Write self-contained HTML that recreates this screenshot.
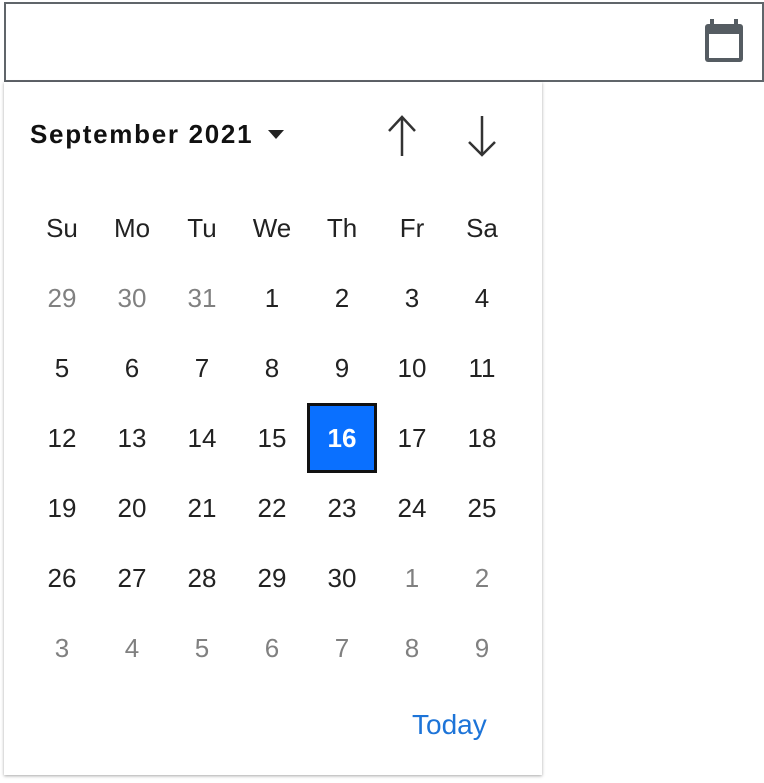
<!DOCTYPE html>
<html><head><style>
body{margin:0;background:#fff;font-family:"Liberation Sans",Arial,sans-serif;width:764px;height:783px;position:relative;overflow:hidden}
.inp{position:absolute;left:4px;top:2px;width:756px;height:76px;border:2px solid #60656a}
.pop{position:absolute;left:4px;top:82px;width:538px;height:693px;background:#fff;box-shadow:0 1px 3px rgba(0,0,0,.35)}
.c{position:absolute;width:70px;height:70px;line-height:70px;text-align:center;font-size:26px;color:#222}
.g{color:#808080}
.sel{background:#0a70ff;color:#fff;font-weight:bold;border:3px solid #111;box-sizing:border-box;line-height:64px}
</style></head><body>
<div class="inp"></div>
<svg style="position:absolute;left:701px;top:18px" width="46" height="46" viewBox="0 0 46 46">
<rect x="4" y="6" width="38" height="38" rx="3" fill="#555c62"/>
<rect x="8" y="16" width="30" height="24" fill="#fff"/>
<rect x="9" y="1" width="4" height="8" fill="#555c62"/><rect x="33" y="1" width="4" height="8" fill="#555c62"/>
</svg>
<div class="pop"></div>
<div style="position:absolute;left:30px;top:119px;font-size:26px;font-weight:bold;color:#111;letter-spacing:1.7px">September 2021</div>
<svg style="position:absolute;left:266px;top:128px" width="20" height="12"><path d="M2 2h16l-8 9z" fill="#222"/></svg>
<svg style="position:absolute;left:380px;top:112px" width="130" height="48" fill="none" stroke="#333" stroke-width="2.5">
<path d="M22 44V5M9 19L22 5l13 14"/><path d="M102 4v39M89 30l13 13 13-13"/></svg>
<div id="g"></div>
<div style="position:absolute;left:412px;top:709px;font-size:28px;color:#1d74d8">Today</div>
<script>
var h=["Su","Mo","Tu","We","Th","Fr","Sa"],s="";
for(var i=0;i<7;i++)s+='<div class="c" style="left:'+(27+70*i)+'px;top:193px">'+h[i]+'</div>';
var d=[29,30,31];for(var i=1;i<=30;i++)d.push(i);for(var i=1;i<=9;i++)d.push(i);
for(var k=0;k<42;k++){var r=Math.floor(k/7),c=k%7,gr=(k<3||k>32);
var cl="c"+(gr?" g":"")+(d[k]==16&&!gr?" sel":"");
s+='<div class="'+cl+'" style="left:'+(27+70*c)+'px;top:'+(263+70*r)+'px">'+d[k]+'</div>';}
document.getElementById("g").innerHTML=s;
</script>
</body></html>
